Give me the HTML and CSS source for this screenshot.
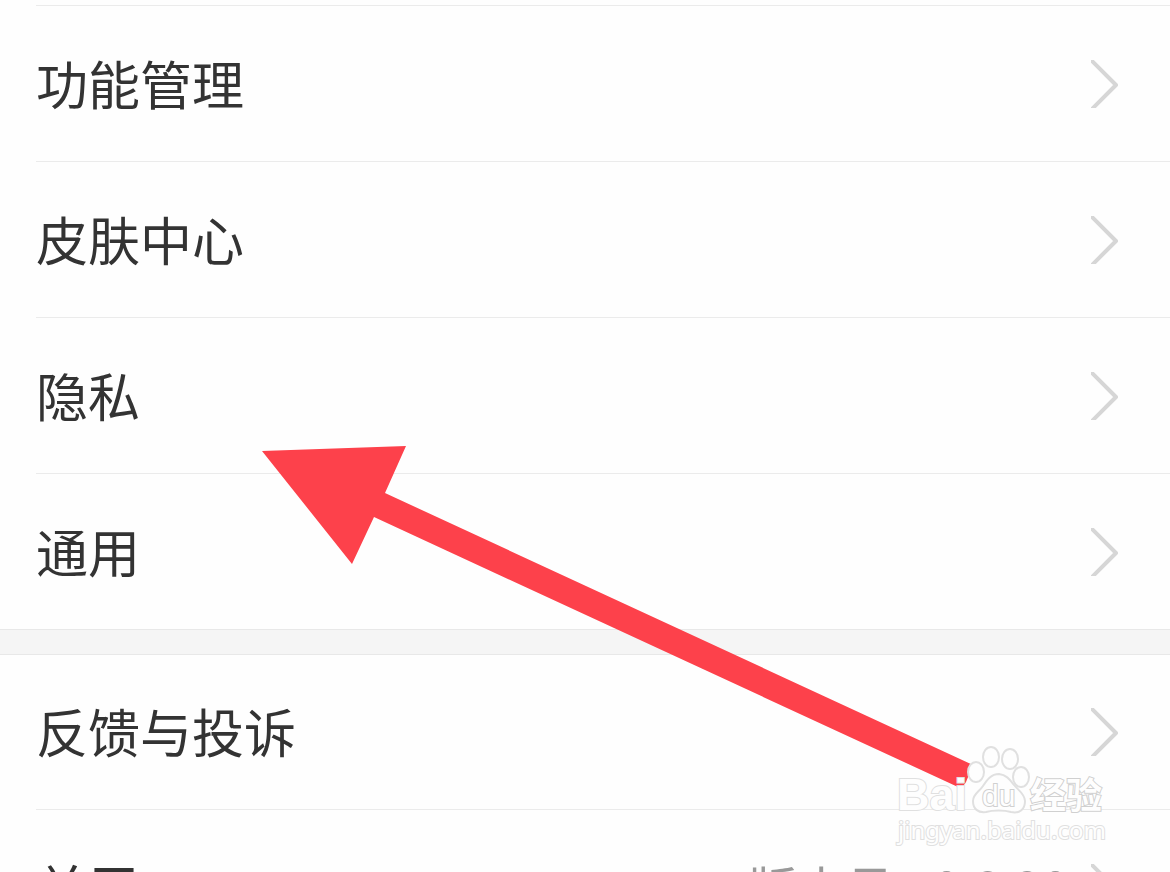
FILE: index.html
```
<!DOCTYPE html>
<html lang="zh-CN">
<head>
    <meta charset="UTF-8">
    <meta name="viewport" content="width=device-width, initial-scale=1.0">
    <title>设置</title>
    <link rel="stylesheet" href="styles.css">
</head>
<body>
    <main class="screen">
        <nav class="group group-first">
            <a class="row" href="#features">
                <span class="label">功能管理</span>
                <svg class="chevron" viewBox="0 0 28 48"><path d="M-1 -1L25 25L-1 51"/></svg>
            </a>
            <a class="row" href="#skins">
                <span class="label">皮肤中心</span>
                <svg class="chevron" viewBox="0 0 28 48"><path d="M-1 -1L25 25L-1 51"/></svg>
            </a>
            <a class="row" href="#privacy">
                <span class="label">隐私</span>
                <svg class="chevron" viewBox="0 0 28 48"><path d="M-1 -1L25 25L-1 51"/></svg>
            </a>
            <a class="row" href="#general">
                <span class="label">通用</span>
                <svg class="chevron" viewBox="0 0 28 48"><path d="M-1 -1L25 25L-1 51"/></svg>
            </a>
        </nav>
        <nav class="group">
            <a class="row" href="#feedback">
                <span class="label">反馈与投诉</span>
                <svg class="chevron" viewBox="0 0 28 48"><path d="M-1 -1L25 25L-1 51"/></svg>
            </a>
            <a class="row" href="#about">
                <span class="label">关于</span>
                <span class="value">版本号 10.8.90</span>
                <svg class="chevron" viewBox="0 0 28 48"><path d="M-1 -1L25 25L-1 51"/></svg>
            </a>
        </nav>

        <!-- pointer to the privacy row -->
        <svg class="arrow" viewBox="0 0 712 344" width="712" height="344">
            <path d="M0 5L144 0L123 47L711 319L704 336Q701 342 696 341L112 71L90 118Z"/>
        </svg>

        <!-- watermark -->
        <svg class="watermark" viewBox="0 0 220 112" width="220" height="112">
            <text class="wm-brand" x="7" y="70">Bai</text>
            <ellipse cx="86" cy="32" rx="8" ry="10"/>
            <ellipse cx="101" cy="17" rx="8" ry="10"/>
            <ellipse cx="120" cy="19" rx="8" ry="10"/>
            <ellipse cx="131" cy="37" rx="8" ry="10"/>
            <path d="M109 34C101 34 97 40 93 46C89 52 83 54 83 61C83 69 88 73 96 72C103 70 114 70 121 72C130 74 135 69 135 61C135 54 128 50 124 45C120 40 117 35 109 34Z"/>
            <text class="wm-du" x="92" y="66">du</text>
            <text class="wm-cn" x="140" y="69">经验</text>
            <text class="wm-url" x="8" y="99">jingyan.baidu.com</text>
        </svg>
    </main>
</body>
</html>
```
FILE: styles.css
```
* { box-sizing: border-box; }
body {
    margin: 0;
    background: #f5f5f5;
    color: #333;
    font-family: "Noto Sans CJK SC", sans-serif;
}
.screen {
    position: relative;
    height: 100vh;
    overflow: hidden;
}
.group {
    padding-left: 36px;
    margin-bottom: 24px;
    background: #fefefe;
    border-bottom: 1px solid #e8e8e8;
}
.group + .group { border-top: 1px solid #e8e8e8; }
.group-first { padding-top: 5px; }
.row {
    display: flex;
    align-items: center;
    height: 154px;
    padding-right: 51px;
    color: #333;
    text-decoration: none;
}
.group-first .row,
.row + .row {
    height: 156px;
    border-top: 1px solid #ebebeb;
}
.label {
    flex: 1;
    padding-bottom: 2px;
    font-size: 52px;
    line-height: 76px;
}
.value {
    margin-right: 22px;
    padding-bottom: 2px;
    color: #999;
    font-size: 49px;
    line-height: 76px;
}
.chevron {
    width: 28px;
    height: 48px;
    fill: none;
    stroke: #d6d6d6;
    stroke-width: 4;
    stroke-linejoin: round;
}
.arrow {
    position: absolute;
    left: 262px;
    top: 446px;
    fill: #fd414b;
}
.watermark {
    position: absolute;
    right: 60px;
    bottom: 20px;
    fill: #fefefe;
    stroke: #e0e0e0;
    stroke-width: 2;
}
.watermark text { paint-order: stroke; }
.wm-brand {
    font: bold 45px "Liberation Sans", sans-serif;
}
.wm-du {
    font: 30px "Liberation Sans", sans-serif;
    stroke: #d0d0d0;
}
.wm-cn {
    font: bold 36px "Noto Sans CJK SC", sans-serif;
    stroke: #d0d0d0;
}
.wm-url {
    font: 24px "Noto Sans", sans-serif;
}
```
